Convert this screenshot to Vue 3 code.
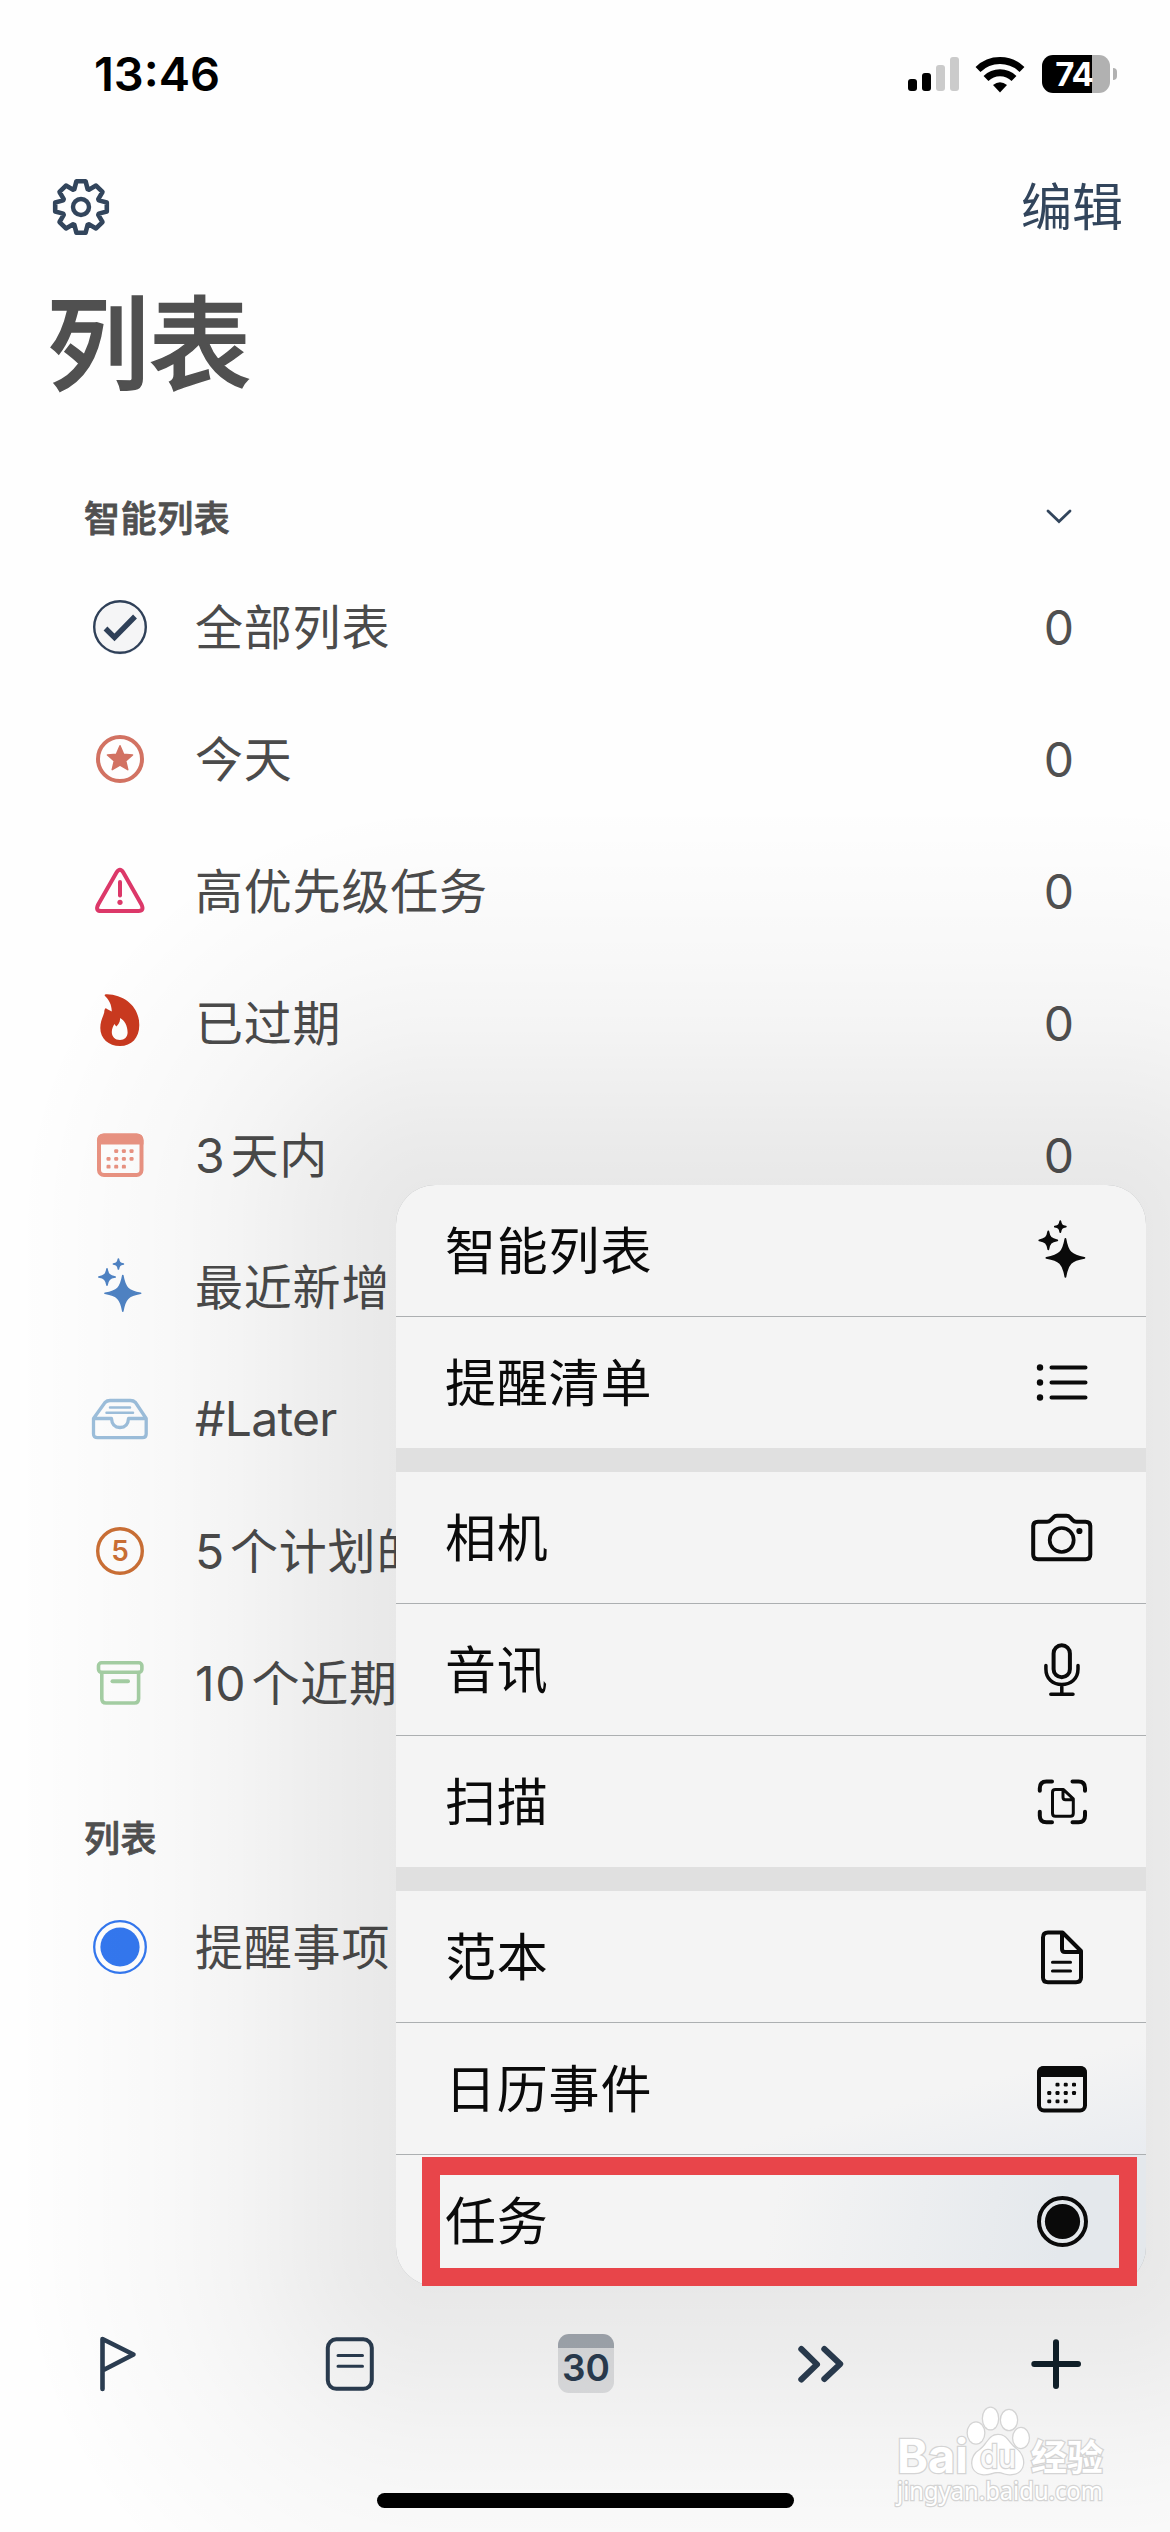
<script setup>
const point = (r, deg) => {
  const a = (deg * Math.PI) / 180
  return `${(32 + r * Math.sin(a)).toFixed(2)} ${(32 - r * Math.cos(a)).toFixed(2)}`
}

const gearPath =
  'M' +
  Array.from({ length: 8 }, (_, i) => i * 45)
    .flatMap((c) => [point(19, c - 20.5), point(26.2, c - 10), point(26.2, c + 10), point(19, c + 20.5)])
    .join('L') +
  'Z'

const starPath =
  'M' + Array.from({ length: 10 }, (_, i) => point(i % 2 ? 6 : 13.2, i * 36)).join('L') + 'Z'

const sparkle = (x, y, r) => {
  const k = r * 0.2
  return `M${x} ${y - r}C${x + k * 0.6} ${y - r * 0.3} ${x + r * 0.3} ${y - k * 0.6} ${x + r} ${y}C${x + r * 0.3} ${y + k * 0.6} ${x + k * 0.6} ${y + r * 0.3} ${x} ${y + r}C${x - k * 0.6} ${y + r * 0.3} ${x - r * 0.3} ${y + k * 0.6} ${x - r} ${y}C${x - r * 0.3} ${y - k * 0.6} ${x - k * 0.6} ${y - r * 0.3} ${x} ${y - r}Z`
}

const calendar = (x, y, w, h) => {
  const dots = [
    [1, 0], [2, 0], [3, 0],
    [0, 1], [1, 1], [2, 1], [3, 1],
    [0, 2], [1, 2], [2, 2],
  ]
    .map(([c, r]) => `<rect x="${x + w * 0.205 + c * w * 0.165}" y="${y + h * 0.36 + r * h * 0.18}" width="4" height="3.8" rx="1.2" fill="currentColor"/>`)
    .join('')
  return `<rect x="${x + 2}" y="${y + 2}" width="${w - 4}" height="${h - 4}" rx="5"/><path d="M${x} ${y + 11}V${y + 7}Q${x} ${y} ${x + 7} ${y}H${x + w - 7}Q${x + w} ${y} ${x + w} ${y + 7}V${y + 11}Z" fill="currentColor" stroke="none"/><g stroke="none">${dots}</g>`
}

const icons = {
  gear: `<path d="${gearPath}" stroke-width="4.6"/><circle cx="32" cy="32" r="8" stroke-width="4.4"/>`,
  check: '<circle cx="32" cy="33" r="26.500" fill="#dce1ea" stroke="none"/><circle cx="32" cy="32" r="25.800" fill="#f5f5f6" stroke-width="2.400"/><path d="M17.5 33.5L26.500 42.5L47 21.500" stroke-width="5.4" stroke-linecap="butt" stroke-linejoin="miter"/>',
  star: `<circle cx="32" cy="32" r="22"/><path d="${starPath}" fill="currentColor" stroke-width="1.5"/>`,
  warning: '<path d="M28.500 13.5Q32 8 35.300 13.500L53.500 45.500Q56.500 52 50.500 52H13Q7 52 10.200 45.500Z"/><path d="M32 23V36.500"/><circle cx="32" cy="43.300" r="2.600" fill="currentColor" stroke="none"/>',
  fire: '<path d="M17 5C16 3.500 17.500 3.200 19 3.300C37 4 51.300 16 51.300 34C51.300 47 43.500 55 32 55C20.500 55 12.300 47.500 12.300 37C12.300 30 15 26 16.200 21.500C16.300 18 17.500 16 19 18L23.800 20.500C23.500 13 21 9 17 5ZM32 27C32.500 31 30 34 28.200 35.500L26.500 33C25 35 23.800 38 23.800 41C23.800 45.500 27 49 32 49C36.500 49 39.600 46 39.600 41.500C39.600 34.500 36.500 29.500 32 27Z" fill="currentColor" fill-rule="evenodd" stroke="none"/>',
  calendarSmall: calendar(9, 10.5, 46.5, 43.5),
  calendarMenu: calendar(7, 9, 50, 46.5),
  sparklesSmall: `<g fill="currentColor" stroke-width="1.6"><path d="${sparkle(34.8, 38.3, 17.800)}"/><path d="${sparkle(19, 22, 8.200)}"/><path d="${sparkle(30.400, 9, 5)}"/></g>`,
  sparklesMenu: `<g fill="currentColor" stroke-width="1.8"><path d="${sparkle(35.4, 38.8, 19)}"/><path d="${sparkle(18.300, 21.300, 9)}"/><path d="${sparkle(30.300, 7.600, 5.500)}"/></g>`,
  inbox: '<g stroke-width="3.300"><path d="M5.500 31.500L17 15.500Q19 13.500 22 13.500H42.500Q45.500 13.500 47.500 15.500L58.200 31.500V47Q58.200 50.700 54.500 50.700H9.500Q5.500 50.700 5.500 47ZM5.500 31.500H23.500Q24 40.500 32 40.500Q40 40.500 40.500 31.500H58.200"/><path d="M22 20.500H42M18.500 25.700H45" stroke-width="2.500"/></g>',
  five: '<circle cx="32" cy="32" r="22.300" stroke-width="3.400"/><text x="32" y="42" text-anchor="middle" font-family="Inter, sans-serif" font-weight="600" font-size="28" fill="currentColor" stroke="none">5</text>',
  archive: '<rect x="10.500" y="11.800" width="43.400" height="9.500" rx="3" stroke-width="3.600"/><path d="M13.800 21.500V47.500Q13.800 52 18 52H46.500Q50.600 52 50.600 47.500V21.500" stroke-width="3.600"/><path d="M24.500 30.300H40"/>',
  reminder: '<circle cx="32" cy="32" r="25.800" fill="#fff" stroke-width="2.300"/><circle cx="32" cy="32" r="19.600" fill="currentColor" stroke="none"/>',
  list: '<path d="M21.500 16.500H55.500M21.500 31.500H55.500M21.500 46.500H55.500"/><g fill="currentColor" stroke="none"><circle cx="10" cy="16.500" r="3.200"/><circle cx="10" cy="31.500" r="3.200"/><circle cx="10" cy="46.500" r="3.200"/></g>',
  camera: '<path d="M3.200 20.500Q3.200 15.800 8 15.800H17Q19.200 15.800 20.700 14.200L23.500 11.300Q24.800 9.800 27 9.800H36.500Q38.700 9.800 40 11.300L42.600 14.200Q44 15.800 46.500 15.800H55.500Q60.300 15.800 60.300 20.500V48.500Q60.300 53.200 55.500 53.200H8Q3.200 53.200 3.200 48.500Z"/><circle cx="31.700" cy="34" r="12" stroke-width="3.700"/><circle cx="49.400" cy="25" r="3.100" fill="currentColor" stroke="none"/>',
  mic: '<rect x="23.600" y="7.300" width="16.300" height="32" rx="8.150"/><path d="M15.900 27.500V31C15.900 41 23 46.500 31.800 46.500C40.600 46.500 48 41 48 31V27.500M31.800 47V56M20.800 56.300H43" stroke-width="3.500"/>',
  scan: '<path d="M9.800 18.500V16Q9.800 9.300 16.500 9.300H22M42.500 9.300H48.500Q55 9.300 55 16V18.500M55 39.500V43.500Q55 50 48.500 50H42.500M22 50H16.500Q9.800 50 9.800 43.500V39.500" transform="translate(0 2.200)"/><path d="M22.500 21.500Q22.500 18.800 25.500 18.800H33.500L43.300 28V42.500Q43.300 45.500 40.300 45.500H25.500Q22.500 45.500 22.500 42.500ZM33 19V26.500Q33 29 35.500 29H43" stroke-width="3" transform="translate(0 .8)"/>',
  document: '<path d="M13 12.500Q13 7.500 18 7.500H32.500L51 26V52.500Q51 57.300 46 57.300H18Q13 57.300 13 52.500ZM32 8V24Q32 27 35 27H50.500"/><path d="M22.500 37.300H40.500M22.500 46H40.500" stroke-width="3.100"/>',
  task: '<circle cx="32.500" cy="32.500" r="23.500"/><circle cx="32.500" cy="32.500" r="17.600" fill="currentColor" stroke="none"/>',
  flag: '<path d="M16.500 57V7L47.500 22.500L16.500 38.500" stroke-width="4.600"/>',
  note: '<rect x="5.800" y="7.300" width="44" height="49.500" rx="8.500"/><path d="M16 23.500H40.500M16 34.300H40.500" stroke-width="3"/>',
  forward: '<path d="M13.300 17L29 32.300L13.300 47.500M36.300 17L52.200 32L36.300 47" stroke-width="6"/>',
  plus: '<path d="M32 10.300V54M10.300 32H54" stroke-width="6"/>',
}

const smartLists = [
  { icon: 'check', color: '#2f4058', label: '全部列表' },
  { icon: 'star', color: '#d27262', label: '今天' },
  { icon: 'warning', color: '#dc3869', label: '高优先级任务' },
  { icon: 'fire', color: '#c9391f', label: '已过期' },
  { icon: 'calendarSmall', color: '#ea9382', digits: '3', label: '天内' },
  { icon: 'sparklesSmall', color: '#4f83c4', label: '最近新增' },
  { icon: 'inbox', color: '#9dbfdc', label: '#Later', latin: true },
  { icon: 'five', color: '#cb6f35', digits: '5', label: '个计划的' },
  { icon: 'archive', color: '#a5cfa4', digits: '10', label: '个近期' },
]

const menuGroups = [
  [
    { label: '智能列表', icon: 'sparklesMenu' },
    { label: '提醒清单', icon: 'list' },
  ],
  [
    { label: '相机', icon: 'camera' },
    { label: '音讯', icon: 'mic' },
    { label: '扫描', icon: 'scan' },
  ],
  [
    { label: '范本', icon: 'document' },
    { label: '日历事件', icon: 'calendarMenu' },
    { label: '任务', icon: 'task' },
  ],
]
</script>

<template>
  <div class="screen">
    <header class="status">
      <span class="time">13:46</span>
      <div class="indicators">
        <div class="signal"><i class="b1" /><i class="b2" /><i class="b3" /><i class="b4" /></div>
        <svg class="wifi" viewBox="0 0 50 37" width="50" height="37">
          <path d="M3 13.500A31.500 31.500 0 0 1 47 13.500" fill="none" stroke="#000" stroke-width="7" />
          <path d="M11 22.500A20 20 0 0 1 39 22.500" fill="none" stroke="#000" stroke-width="7" />
          <path d="M25 36.500L18 29Q25 23.500 32 29Z" />
        </svg>
        <div class="battery"><span>74</span></div>
        <i class="nub" />
      </div>
    </header>

    <nav class="nav">
      <svg class="icon" viewBox="0 0 64 64" v-html="icons.gear" />
      <span>编辑</span>
    </nav>
    <h1 class="title">列表</h1>

    <section class="lists">
      <div class="section-head">
        <h2>智能列表</h2>
        <svg class="chevron" viewBox="0 0 26 16" width="26" height="16"><path d="M2 2L13 12.500L24 2" /></svg>
      </div>
      <div v-for="item in smartLists" :key="item.label" class="row">
        <svg class="icon" viewBox="0 0 64 64" :style="{ color: item.color }" v-html="icons[item.icon]" />
        <span class="label" :class="{ latin: item.latin }"><b v-if="item.digits">{{ item.digits }}</b>{{ item.label }}</span>
        <span class="count">0</span>
      </div>
      <div class="section-head second"><h2>列表</h2></div>
      <div class="row">
        <svg class="icon blue" viewBox="0 0 64 64" v-html="icons.reminder" />
        <span class="label">提醒事项</span>
      </div>
    </section>

    <footer class="toolbar">
      <svg class="icon" viewBox="0 0 64 64" v-html="icons.flag" />
      <svg class="icon" viewBox="0 0 64 64" v-html="icons.note" />
      <div class="day"><span>30</span></div>
      <svg class="icon" viewBox="0 0 64 64" v-html="icons.forward" />
      <svg class="icon dark" viewBox="0 0 64 64" v-html="icons.plus" />
    </footer>
    <div class="home-bar" />

    <div class="menu-shadow" />
    <div class="menu">
      <div v-for="(group, g) in menuGroups" :key="g" class="group">
        <div v-for="item in group" :key="item.label" class="menu-item">
          <span>{{ item.label }}</span>
          <svg class="icon" viewBox="0 0 64 64" v-html="icons[item.icon]" />
        </div>
      </div>
    </div>
    <div class="highlight" />

    <svg class="watermark" viewBox="0 0 220 126" width="220" height="126">
      <g class="mark">
        <text x="3" y="71" class="brand" textLength="71" lengthAdjust="spacingAndGlyphs">Bai</text>
        <ellipse cx="82" cy="31" rx="8.200" ry="10.500" />
        <ellipse cx="96.500" cy="16.500" rx="7.500" ry="10.800" />
        <ellipse cx="115" cy="18" rx="8" ry="10" />
        <ellipse cx="127" cy="36" rx="7.800" ry="10" />
        <path d="M104 33C113 33 114 41 122 47C132 54 132 71 118 72C110 73 110 70 104 70C97 70 96 73 88 72C75 70 76 54 86 48C94 42 95 33 104 33Z" />
        <text x="86" y="66" class="du" textLength="36" lengthAdjust="spacingAndGlyphs">du</text>
        <text x="137" y="69" class="cn">经验</text>
        <text x="3" y="98" class="site" textLength="206" lengthAdjust="spacingAndGlyphs">jingyan.baidu.com</text>
      </g>
    </svg>
  </div>
</template>

<style>
body {
  margin: 0;
  background: #fff;
}
</style>

<style scoped>
.screen {
  position: relative;
  display: flex;
  flex-direction: column;
  width: 1170px;
  height: 2532px;
  overflow: hidden;
  background: #fefefe;
  color: #505050;
  font-family: Inter, "Noto Sans CJK SC", sans-serif;
}

.icon {
  flex: none;
  width: 64px;
  height: 64px;
  fill: none;
  stroke: currentColor;
  stroke-width: 4;
  stroke-linecap: round;
  stroke-linejoin: round;
  overflow: visible;
}

.status {
  display: flex;
  align-items: center;
  justify-content: space-between;
  height: 148px;
  padding: 0 53px 0 94px;
  color: #000;
}

.time {
  font-size: 47px;
  font-weight: 600;
  line-height: 56px;
}

.indicators {
  display: flex;
  align-items: center;
}

.signal {
  display: flex;
  align-items: flex-end;
  gap: 5px;
  height: 34px;
  margin-right: 16px;
}

.signal i {
  width: 9px;
  border-radius: 3px;
  background: #000;
}

.b1 { height: 12px; }
.b2 { height: 18px; }
.signal .b3 { height: 26px; background: #cbcbcb; }
.signal .b4 { height: 34px; background: #cbcbcb; }

.wifi {
  margin-right: 17px;
}

.battery {
  width: 68px;
  height: 38px;
  border-radius: 11px;
  background: linear-gradient(90deg, #000 50px, #b1b1b1 50px);
  color: #fff;
  font-size: 33px;
  font-weight: 700;
  line-height: 38px;
  text-align: center;
  letter-spacing: -1px;
}

.battery span {
  margin-right: 4px;
}

.nub {
  width: 4px;
  height: 12px;
  margin-left: 3px;
  border-radius: 0 5px 5px 0;
  background: #b1b1b1;
}

.nav {
  display: flex;
  align-items: center;
  justify-content: space-between;
  height: 117px;
  padding: 0 47px 0 49px;
  color: #32455c;
  font-size: 51px;
}

.nav span {
  padding-bottom: 6px;
}

.title {
  height: 163px;
  margin: 0 0 47px 47px;
  font-size: 102px;
  font-weight: 500;
  line-height: 160px;
  -webkit-text-stroke: 1.6px currentColor;
}

.section-head {
  display: flex;
  align-items: center;
  justify-content: space-between;
  height: 86px;
  padding: 0 98px 0 84px;
}

.section-head h2 {
  margin: 0;
  padding-bottom: 4px;
  font-size: 36px;
  font-weight: 500;
  letter-spacing: 0.6px;
  -webkit-text-stroke: 0.8px currentColor;
}

.section-head.second {
  height: 86px;
  padding-top: 46px;
}

.chevron {
  margin-bottom: 3px;
}

.chevron path {
  fill: none;
  stroke: #32455c;
  stroke-width: 2.8;
  stroke-linecap: round;
}

.row {
  display: flex;
  align-items: center;
  height: 132px;
  padding: 0 96px 0 88px;
  font-size: 48px;
}

.label {
  flex: 1;
  margin-left: 43px;
  padding-bottom: 6px;
  color: #4b4b4b;
  letter-spacing: 0.8px;
  white-space: nowrap;
}

.label.latin {
  padding-bottom: 1px;
  letter-spacing: -0.7px;
}

.label b {
  margin-right: 5px;
  font-weight: 400;
}

.blue {
  color: #3478f0;
}

.toolbar {
  display: flex;
  align-items: center;
  justify-content: space-between;
  height: 104px;
  margin-top: 299px;
  padding: 0 82px 0 86px;
  color: #2b3d51;
}

.dark {
  color: #10202a;
}

.day {
  width: 56px;
  height: 59px;
  margin: 0 2px 2px 0;
  border-radius: 11px;
  background: linear-gradient(#a5abb3 14px, #e1e2e4 14px);
  font-size: 37px;
  font-weight: 600;
  line-height: 68px;
  text-align: center;
}

.home-bar {
  width: 417px;
  height: 15px;
  margin: 77px 0 0 377px;
  border-radius: 8px;
  background: #000;
}

/* Wide ambient shadow: four edge strips and four rounded corners sharing one falloff. */
.menu-shadow {
  --r: 419px;
  --falloff: rgba(0, 0, 0, 0.086) 39px, rgba(0, 0, 0, 0.074) 88px, rgba(0, 0, 0, 0.058) 138px,
    rgba(0, 0, 0, 0.041) 199px, rgba(0, 0, 0, 0.024) 269px, rgba(0, 0, 0, 0.01) 345px, rgba(0, 0, 0, 0) 419px;
  position: absolute;
  top: 805px;
  left: 16px;
  width: 1510px;
  height: 1861px;
  background:
    radial-gradient(circle at bottom right, var(--falloff)) left 0 top 0 / var(--r) var(--r),
    radial-gradient(circle at bottom left, var(--falloff)) right 0 top 0 / var(--r) var(--r),
    radial-gradient(circle at top right, var(--falloff)) left 0 bottom 0 / var(--r) var(--r),
    radial-gradient(circle at top left, var(--falloff)) right 0 bottom 0 / var(--r) var(--r),
    linear-gradient(to top, var(--falloff)) 419px 0 / 672px var(--r),
    linear-gradient(to bottom, var(--falloff)) left 419px bottom 0 / 672px var(--r),
    linear-gradient(to left, var(--falloff)) 0 419px / var(--r) 1023px,
    linear-gradient(to right, var(--falloff)) right 0 top 419px / var(--r) 1023px;
  background-repeat: no-repeat;
  pointer-events: none;
}

.menu {
  position: absolute;
  top: 1185px;
  left: 396px;
  display: flex;
  flex-direction: column;
  gap: 24px;
  width: 750px;
  height: 1101px;
  border-radius: 39px;
  overflow: hidden;
  background: #e0e0e0;
  color: #0a0a0a;
  font-size: 51px;
  letter-spacing: 0.8px;
}

.group {
  display: flex;
  flex-direction: column;
  gap: 1px;
  background: #acafb1;
}

.menu-item {
  display: flex;
  align-items: center;
  justify-content: space-between;
  height: 131px;
  padding: 0 52px 0 49px;
  background: #f4f4f4;
}

.menu-item span {
  padding-bottom: 6px;
}

.group:last-child .menu-item:nth-child(2) {
  background: linear-gradient(165deg, #f4f4f4 65%, #e9ecf0);
}

.group:last-child .menu-item:nth-child(3) {
  background: linear-gradient(100deg, #f4f4f4 50%, #e4e8ec 88%);
}

.highlight {
  position: absolute;
  top: 2157px;
  left: 422px;
  box-sizing: border-box;
  width: 715px;
  height: 129px;
  border: 18px solid #e8454a;
}

.watermark {
  position: absolute;
  top: 2402px;
  left: 894px;
  overflow: visible;
}

.mark {
  fill: #fff;
  stroke: #d4d4d4;
  stroke-width: 2.6;
  paint-order: stroke;
}

.brand {
  font: 700 47px Inter, sans-serif;
}

.du {
  fill: #fafafa;
  font: 500 32px Inter, sans-serif;
}

.cn {
  font: 700 36px "Noto Sans CJK SC", sans-serif;
}

.site {
  font: 400 25px "Noto Sans", sans-serif;
}
</style>
